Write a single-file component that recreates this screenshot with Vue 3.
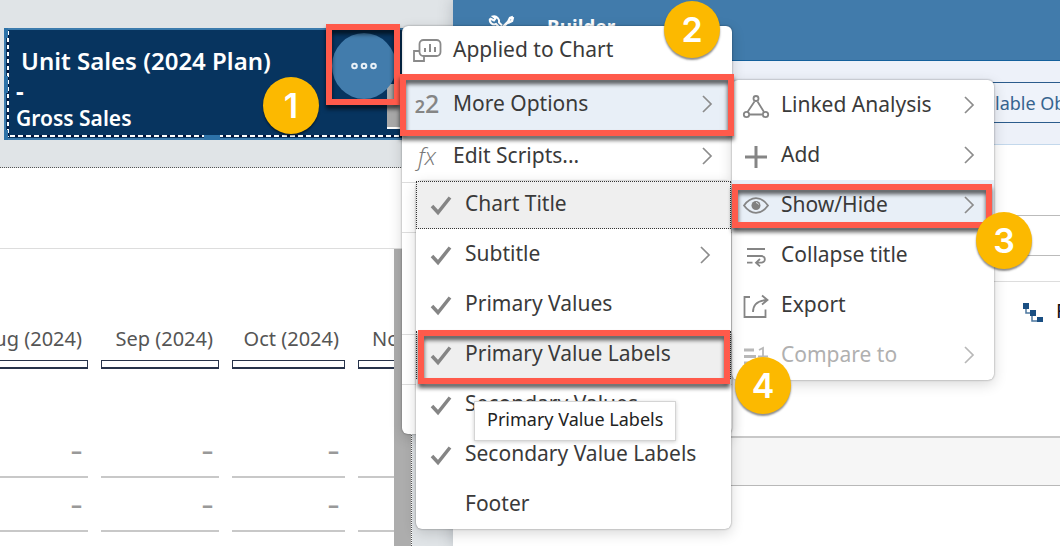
<script setup>
const months = ['Aug (2024)', 'Sep (2024)', 'Oct (2024)', 'Nov (2024)']
const rows = [0, 1]

const chartActions = [
  { label: 'Applied to Chart', icon: 'applied' },
  { label: 'More Options', icon: 'more', arrow: true, active: true },
  { label: 'Edit Scripts...', icon: 'script', arrow: true },
]

const moreOptions = [
  { label: 'Linked Analysis', icon: 'linked', arrow: true },
  { label: 'Add', icon: 'add', arrow: true },
  { label: 'Show/Hide', icon: 'eye', arrow: true, active: true },
  { label: 'Collapse title', icon: 'collapse' },
  { label: 'Export', icon: 'export' },
  { label: 'Compare to', icon: 'compare', arrow: true, disabled: true },
]

const visibility = [
  { label: 'Chart Title', checked: true, focus: true },
  { label: 'Subtitle', checked: true, arrow: true },
  { label: 'Primary Values', checked: true },
  { label: 'Primary Value Labels', checked: true, focus: true },
  { label: 'Secondary Values', checked: true },
  { label: 'Secondary Value Labels', checked: true },
  { label: 'Footer', checked: false },
]
</script>

<template>
  <div class="page">
    <main class="canvas">
      <section class="stage">
        <article class="kpi">
          <h1>Unit Sales (2024 Plan)</h1>
          <span class="dash">-</span>
          <h2>Gross Sales</h2>
          <i class="handle h-top"></i>
          <i class="handle h-mid"></i>
          <i class="handle h-low"></i>
          <i class="handle h-base"></i>
          <i class="kpi-scroll"></i>
          <button class="round" type="button" aria-label="More actions">
            <svg viewBox="0 0 28 8" width="28" height="8">
              <g fill="none" stroke="#e8f0f7" stroke-width="2">
                <circle cx="4.500" cy="4" r="2.300" />
                <circle cx="14" cy="4" r="2.300" />
                <circle cx="23.500" cy="4" r="2.300" />
              </g>
            </svg>
          </button>
        </article>
      </section>
      <section class="sheet">
        <div class="sheet-title"></div>
        <div class="sheet-body">
          <div class="table-wrap">
            <table>
              <colgroup>
                <col class="c1" /><col class="c2" /><col class="c3" /><col class="c4" />
              </colgroup>
              <thead>
                <tr>
                  <th v-for="m in months" :key="m" scope="col">
                    <span class="month">{{ m }}</span>
                    <div class="bar"></div>
                  </th>
                </tr>
              </thead>
              <tbody>
                <tr v-for="r in rows" :key="r">
                  <td v-for="m in months" :key="m">–</td>
                </tr>
              </tbody>
            </table>
          </div>
          <div class="track"></div>
        </div>
      </section>
    </main>

    <aside class="panel">
      <header class="panel-head">
        <svg viewBox="0 0 28 26" width="28" height="26" fill="none" stroke="#fff">
          <path d="M3 4.500a4.500 4.500 0 0 0 6 5.500L21 22M3 4.500l4 2 1.500-2L6 2.500a5 5 0 0 1 6 6l3 3" stroke-width="2" />
          <path d="M26 3l-3 1-2 4-5 5M26 3l-1 4-4 2" stroke-width="2.500" />
          <path d="M13 14l-7 8" stroke-width="3" />
        </svg>
        <span>Builder</span>
      </header>
      <div class="tools">
        <button class="objects" type="button">Available Objects</button>
      </div>
      <div class="field-area">
        <input class="field" type="text" aria-label="Data source" />
      </div>
      <div class="structure">
        <svg viewBox="0 0 22 22" width="22" height="22">
          <path d="M4 6v5h6M10 13v6h6" fill="none" stroke="#4c779f" stroke-width="1.500" />
          <path d="M1 1h6v6H1zM8 8h6v6H8zM15 15h6v5h-6z" fill="#1a4f83" />
        </svg>
        <span>Filters</span>
      </div>
      <div class="band"></div>
    </aside>

    <div class="menu menu-main" role="menu">
      <button
        v-for="a in chartActions"
        :key="a.label"
        class="item"
        :class="{ active: a.active }"
        type="button"
        role="menuitem"
      >
        <span class="icon">
          <svg v-if="a.icon === 'applied'" viewBox="0 0 30 28" width="30" height="28" fill="none" stroke="#8a8a8a" stroke-width="1.800">
            <rect x="7.500" y="4" width="21" height="16" rx="4" />
            <path d="M7 15H2v10h10v-5" />
            <path d="M13 16v-4M18 16V8M23 16v-5" stroke-width="2" />
          </svg>
          <span v-else-if="a.icon === 'more'" class="twos"><small>2</small>2</span>
          <span v-else class="fx">fx</span>
        </span>
        <span class="label">{{ a.label }}</span>
        <svg v-if="a.arrow" class="chevron" viewBox="0 0 12 18" width="12" height="18"><path d="M2 1l8 8-8 8" /></svg>
      </button>
      <div class="group"></div>
      <div class="group tall"></div>
      <div class="group"></div>
      <div class="group"></div>
    </div>

    <div class="menu menu-more" role="menu">
      <button
        v-for="o in moreOptions"
        :key="o.label"
        class="item"
        :class="{ active: o.active }"
        :disabled="o.disabled"
        type="button"
        role="menuitem"
      >
        <span class="icon">
          <svg viewBox="0 0 28 28" width="28" height="28" fill="none" stroke="#858585" stroke-width="1.800">
            <g v-if="o.icon === 'linked'">
              <path d="M12.500 10.500L5.500 21M15.500 10.500l6.500 10.500M7.500 23.500h12.500" />
              <circle cx="14" cy="7.500" r="2.500" />
              <circle cx="4.500" cy="23.500" r="2.700" />
              <circle cx="23.500" cy="23.500" r="2.700" />
            </g>
            <path v-else-if="o.icon === 'add'" d="M14 5v22M3 16h22" stroke-width="3" />
            <g v-else-if="o.icon === 'eye'">
              <path d="M2 14.500C6 9 10 7.200 14 7.200s8 1.800 12 7.300c-4 5.500-8 7.300-12 7.300S6 20 2 14.500z" />
              <circle cx="14" cy="14.500" r="4.500" fill="#808080" stroke="none" />
              <path d="M14 11.500a3 3 0 0 1 2.500 2" stroke="#dfe5ea" stroke-width="1" />
            </g>
            <g v-else-if="o.icon === 'collapse'">
              <path d="M5 8h18M5 15h14.500a3.300 3.300 0 0 1 0 6.700H15M5 21.700h5.500M18 18l-4 3.700 4 3.700" />
            </g>
            <g v-else-if="o.icon === 'export'">
              <path d="M8 6H2.500v20h21V18.500" />
              <path d="M11 21C11 13.500 15 9.500 25 9M20 4.500L25.500 9 20 13.500" />
            </g>
            <g v-else stroke="#b8b8b8">
              <path d="M2 9h10M2 15.500h12M2 22h10" stroke-width="3" />
              <path d="M17 9l4-2v8M16 15.500h10M21 18v6" />
            </g>
          </svg>
        </span>
        <span class="label">{{ o.label }}</span>
        <svg v-if="o.arrow" class="chevron" viewBox="0 0 12 18" width="12" height="18"><path d="M2 1l8 8-8 8" /></svg>
      </button>
    </div>

    <div class="menu menu-show" role="menu">
      <button
        v-for="v in visibility"
        :key="v.label"
        class="item"
        :class="{ focus: v.focus }"
        type="button"
        role="menuitemcheckbox"
        :aria-checked="v.checked"
      >
        <span class="icon">
          <svg v-if="v.checked" viewBox="0 0 22 22" width="22" height="22">
            <path d="M2 12l6 6.500L20 3.500" fill="none" stroke="#858585" stroke-width="3.500" />
          </svg>
        </span>
        <span class="label">{{ v.label }}</span>
        <svg v-if="v.arrow" class="chevron" viewBox="0 0 12 18" width="12" height="18"><path d="M2 1l8 8-8 8" /></svg>
      </button>
    </div>

    <div class="tooltip" role="tooltip">Primary Value Labels</div>

    <div class="frame f1"></div>
    <div class="frame f2"></div>
    <div class="frame f3"></div>
    <div class="frame f4"></div>
    <div class="step s1">1</div>
    <div class="step s2">2</div>
    <div class="step s3">3</div>
    <div class="step s4">4</div>
  </div>
</template>

<style>
body {
  margin: 0;
}
</style>

<style scoped>
.page {
  position: relative;
  display: flex;
  height: 100vh;
  overflow: hidden;
  font-family: "Noto Sans", "Open Sans", sans-serif;
  color: #333;
  background: #e0e4e7;
}
.page * {
  box-sizing: border-box;
}
button {
  font-family: inherit;
  margin: 0;
}

/* canvas */
.canvas {
  flex: 0 0 453px;
  display: flex;
  flex-direction: column;
}
.stage {
  height: 168px;
  padding: 28px 0 0 4px;
  border-bottom: 1px dotted #555;
}
.kpi {
  position: relative;
  height: 112px;
  margin-right: 30px;
  padding: 14px 0 0 10px;
  background: #07345f;
  border: 2px solid #3c7bad;
  color: #fff;
}
.kpi::before,
.kpi::after {
  content: "";
  position: absolute;
}
.kpi::before {
  left: 1px;
  top: 1px;
  bottom: 1px;
  width: 2px;
  background: repeating-linear-gradient(#fff 0 4px, #04163c 4px 7px);
}
.kpi::after {
  left: 4px;
  right: 0;
  bottom: 1px;
  height: 2px;
  background: repeating-linear-gradient(90deg, #fff 0 5px, #04163c 5px 8px);
}
.kpi h1 {
  margin: 0 0 0 5px;
  font-size: 24px;
  line-height: 34px;
  font-weight: 600;
}
.kpi .dash {
  display: block;
  font-size: 24px;
  line-height: 26px;
  font-weight: 700;
}
.kpi h2 {
  margin: 0;
  font-size: 21px;
  line-height: 28px;
  font-weight: 600;
}
.handle {
  position: absolute;
  z-index: 1;
  background: #2d72a8;
}
.h-top, .h-mid, .h-low {
  left: -2px;
  width: 4px;
}
.h-top { top: -2px; height: 10px; }
.h-mid { top: 46px; height: 17px; }
.h-low { bottom: -2px; height: 10px; }
.h-base { left: 198px; bottom: -2px; width: 16px; height: 5px; }
.kpi-scroll {
  position: absolute;
  right: 0;
  top: 54px;
  width: 34px;
  height: 45px;
  background: #a9a9a9;
  border-bottom: 2px solid #fff;
}
.round {
  position: absolute;
  left: 326px;
  top: 3px;
  width: 64px;
  height: 66px;
  padding: 0;
  border: 0;
  border-radius: 50%;
  background: #427cac;
  display: flex;
  align-items: center;
  justify-content: center;
}
.sheet {
  flex: 1;
  width: 412px;
  display: flex;
  flex-direction: column;
  background: #fff;
  border-right: 1px dotted #555;
}
.sheet-title {
  height: 81px;
  border-bottom: 1px solid #ddd;
}
.sheet-body {
  flex: 1;
  display: flex;
  min-height: 0;
}
.table-wrap {
  flex: 1;
  overflow: hidden;
}
.track {
  flex: 0 0 17px;
  background: #adadad;
}
table {
  table-layout: fixed;
  width: 544px;
  margin-left: -53px;
  border-collapse: separate;
  border-spacing: 13px 0;
}
.c1 { width: 128px; }
.c2 { width: 118px; }
.c3 { width: 113px; }
.c4 { width: 120px; }
th {
  padding: 76px 0 55px;
  text-align: right;
  font-size: 20px;
  line-height: 28px;
  font-weight: 400;
  color: #555;
  white-space: nowrap;
}
.month {
  padding-right: 6px;
}
.bar {
  height: 9px;
  margin-top: 7px;
  border: 1px solid #27334a;
  border-bottom-width: 2px;
}
td {
  height: 54px;
  padding: 0 6px;
  border-bottom: 2px solid #c8c8c8;
  text-align: right;
  font-size: 22px;
  line-height: 28px;
  font-weight: 700;
  color: #999;
}

/* builder panel */
.panel {
  flex: 1;
  min-width: 0;
  background: #fff;
  box-shadow: 0 0 14px rgba(80, 90, 100, 0.3);
}
.panel-head {
  height: 61px;
  padding: 0 0 6px 34px;
  display: flex;
  align-items: center;
  gap: 32px;
  background: #417bab;
  border-bottom: 1px solid #14609c;
  color: #fff;
  font-size: 19px;
  line-height: 26px;
  font-weight: 700;
}
.tools {
  height: 84px;
  padding: 21px 0 0;
  background: #edf1f9;
  border-bottom: 1px solid #c3d8ec;
  display: flex;
  justify-content: flex-end;
  overflow: hidden;
}
.objects {
  flex: none;
  height: 41px;
  margin-right: -68px;
  padding: 0 24px;
  border: 1px solid #2b5c8c;
  border-right: 0;
  background: #eff3fa;
  color: #36648f;
  font-size: 18px;
  line-height: 26px;
}
.field-area {
  height: 137px;
  padding: 70px 0 0 32px;
  border-bottom: 1px solid #ddd;
}
.field {
  display: block;
  width: 100%;
  height: 41px;
  border: 1px solid #bbb;
  border-right: 0;
  background: #fff;
}
.structure {
  height: 154px;
  padding-top: 16px;
  display: flex;
  align-items: flex-start;
  justify-content: flex-end;
  gap: 12px;
  overflow: hidden;
  font-size: 20px;
  line-height: 26px;
  color: #111;
}
.structure svg {
  margin-top: 4px;
  flex: none;
}
.structure span {
  flex: none;
  width: 4px;
}
.band {
  height: 50px;
  background: #f6f6f6;
  border-top: 2px solid #c8c8c8;
  border-bottom: 1px solid #b8b8b8;
}

/* menus */
.menu {
  position: absolute;
  display: flex;
  flex-direction: column;
  background: #fff;
  border-radius: 6px;
  box-shadow: 0 0 2px rgba(0, 0, 0, 0.45), 0 4px 14px rgba(0, 0, 0, 0.16);
}
.menu-main {
  left: 402px;
  top: 26px;
  width: 330px;
}
.menu-more {
  left: 732px;
  top: 80px;
  width: 262px;
}
.menu-show {
  left: 416px;
  top: 181px;
  width: 315px;
  gap: 2px;
}
.item {
  display: flex;
  align-items: center;
  height: 50px;
  padding: 0 19px 0 10px;
  border: 0;
  background: none;
  text-align: left;
  font-size: 21px;
  line-height: 28px;
  color: #3a3a3a;
}
.menu-main .item {
  height: 52px;
}
.menu-main .item:first-child {
  padding-bottom: 4px;
}
.menu-show .item {
  height: 48px;
  border: 1px solid transparent;
}
.item.active {
  background: #e8eff7;
}
.menu-show .item.focus {
  background: #efefef;
  border: 1px dotted #333;
}
.item:disabled {
  color: #b0b0b0;
}
.icon {
  flex: none;
  display: flex;
  justify-content: center;
  width: 28px;
  margin-right: 11px;
}
.menu-main .icon {
  width: 30px;
}
.menu-show .icon {
  margin-right: 10px;
}
.icon svg {
  flex: none;
}
.label {
  flex: 1;
  padding-bottom: 2px;
  white-space: nowrap;
}
.menu-show .label {
  padding-bottom: 4px;
}
.chevron {
  flex: none;
}
.chevron path {
  fill: none;
  stroke: #8c8c8c;
  stroke-width: 1.7;
}
.item:disabled .chevron path {
  stroke: #b8b8b8;
}
.twos {
  font-size: 25px;
  font-weight: 500;
  color: #858585;
}
.twos small {
  font-size: 18px;
  font-weight: 600;
}
.fx {
  font-family: "Open Sans", "Noto Sans", sans-serif;
  font-style: italic;
  font-size: 24px;
  font-weight: 300;
  color: #777;
}
.group {
  height: 50px;
  border-top: 1px solid #ddd;
}
.group.tall {
  height: 102px;
}
.tooltip {
  position: absolute;
  left: 474px;
  top: 401px;
  padding: 4px 12px 7px;
  border: 1px solid #d4d4d4;
  background: #fff;
  box-shadow: 0 1px 4px rgba(0, 0, 0, 0.2);
  font-size: 18px;
  line-height: 27px;
  color: #222;
}

/* walkthrough callouts */
.frame {
  position: absolute;
  border: 6px solid #ff5a4b;
  filter: drop-shadow(0 4px 2px rgba(0, 0, 0, 0.65));
  pointer-events: none;
}
.f1 { left: 326px; top: 24px; width: 74px; height: 81px; }
.f2 { left: 400px; top: 74px; width: 334px; height: 62px; }
.f3 { left: 732px; top: 184px; width: 260px; height: 44px; }
.f4 { left: 418px; top: 330px; width: 312px; height: 54px; }
.step {
  position: absolute;
  display: flex;
  align-items: center;
  justify-content: center;
  width: 56px;
  height: 57px;
  border-radius: 50%;
  background: #fcb900;
  box-shadow: 0 2px 2px rgba(0, 0, 0, 0.45);
  color: #fff;
  font-family: Inter, "Liberation Sans", sans-serif;
  font-size: 34px;
  line-height: 40px;
  font-weight: 600;
}
.s1 { left: 263px; top: 77px; }
.s2 { left: 664px; top: 1px; }
.s3 { left: 976px; top: 212px; }
.s4 { left: 735px; top: 357px; }
</style>
